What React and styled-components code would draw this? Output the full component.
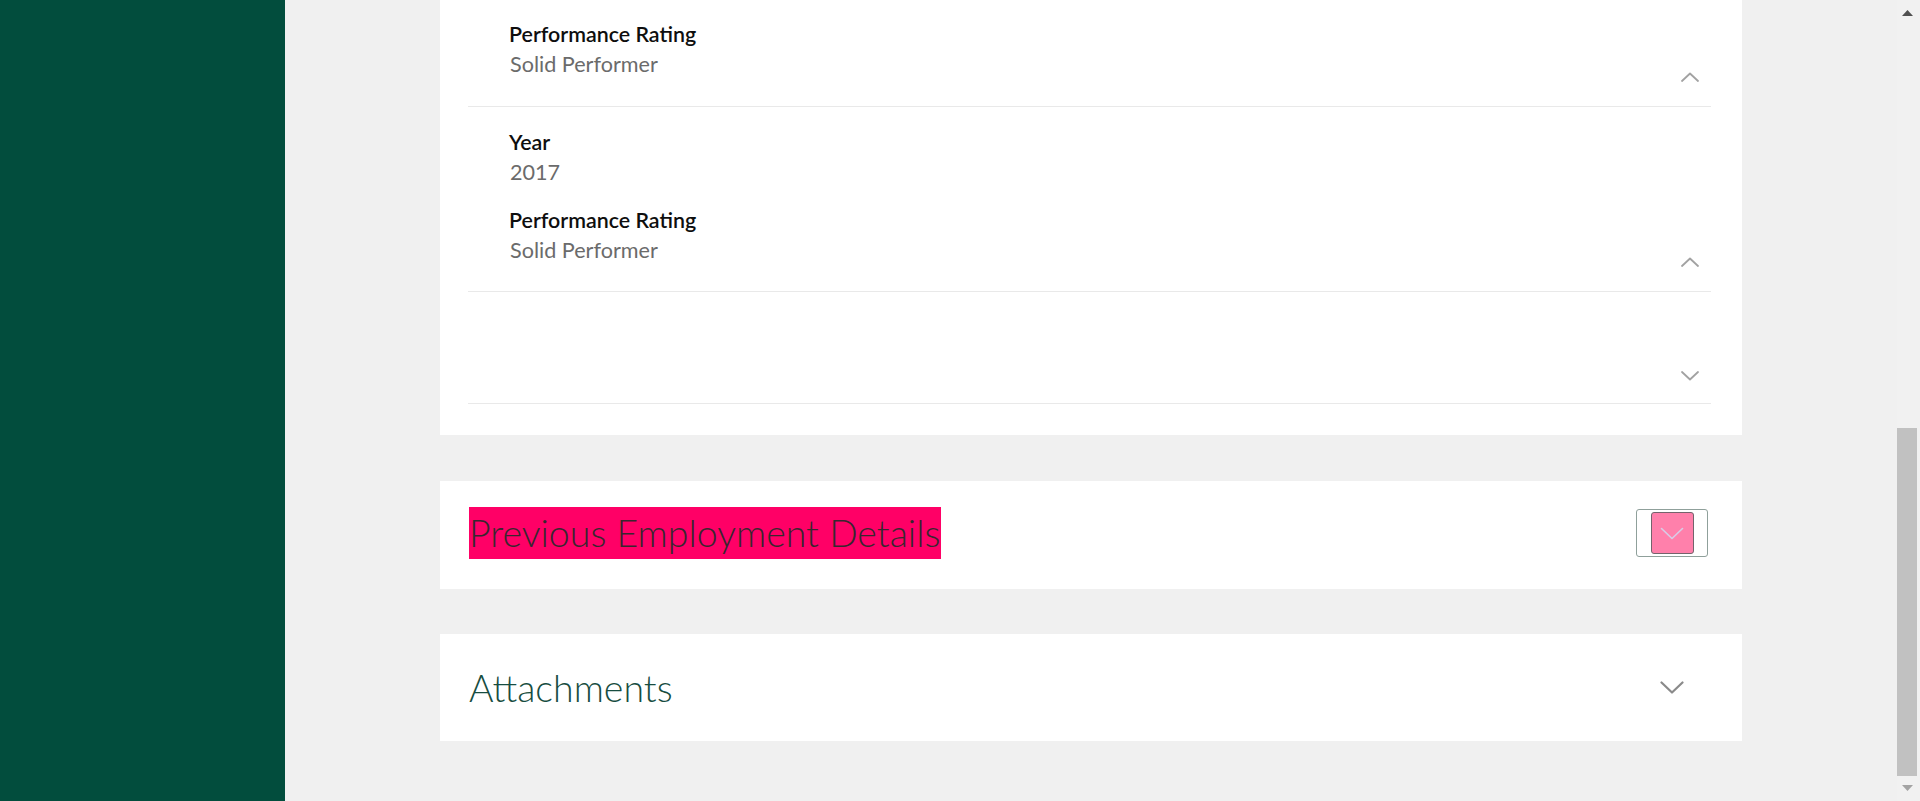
import React from "react";
import styled, { createGlobalStyle } from "styled-components";

const GlobalStyle = createGlobalStyle`
  html, body { margin: 0; padding: 0; }
  body {
    font-family: "Segoe UI", Lato, "Open Sans", sans-serif;
    background: #f0f0f0;
    overflow: hidden;
  }
  * { box-sizing: border-box; }
`;

const Page = styled.div`
  display: flex;
  width: 1920px;
  height: 801px;
  overflow: hidden;
`;

const Sidebar = styled.aside`
  flex: 0 0 285px;
  background: #024d3d;
`;

const Main = styled.main`
  flex: 1;
  display: flex;
  flex-direction: column;
  align-items: center;
  gap: 45px;
  background: #f0f0f0;
  overflow: hidden;
`;

const Card = styled.section`
  width: 1302px;
  flex: 0 0 auto;
  background: #ffffff;
`;

const DetailCard = styled(Card)`
  padding: 0 31px 31px 28px;
  margin-bottom: 1px;
`;

const CardHeader = styled.header`
  display: flex;
  align-items: center;
  justify-content: space-between;
  height: ${(p) => p.$h || 108}px;
  padding: 0 34px ${(p) => p.$pb || 0}px 29px;
`;

const Title = styled.h2`
  margin: 0;
  display: inline-block;
  font-family: Lato, "Open Sans", sans-serif;
  font-weight: 300;
  font-size: 37.5px;
  line-height: 52px;
  padding-right: 1px;
  color: ${(p) => p.$color || "#174d41"};
  background: ${(p) => p.$bg || "transparent"};
`;

const Row = styled.div`
  display: flex;
  justify-content: space-between;
  min-height: ${(p) => p.$minH || 0}px;
  padding-top: ${(p) => (p.$pt != null ? p.$pt : 22)}px;
  border-bottom: 1px solid #e9e9e9;
`;

const Fields = styled.div`
  display: flex;
  flex-direction: column;
  gap: 22px;
  padding: 0 0 ${(p) => (p.$pb != null ? p.$pb : 29)}px 41px;
`;

const Field = styled.div`
  display: flex;
  flex-direction: column;
  gap: 4px;
`;

const Label = styled.div`
  font-family: Lato, "Open Sans", sans-serif;
  font-weight: 600;
  font-size: 21.4px;
  line-height: 26px;
  color: #0e0e0e;
`;

const Value = styled.div`
  font-family: Lato, "Open Sans", sans-serif;
  font-weight: 400;
  font-size: 21.6px;
  line-height: 26px;
  color: #6b6b6b;
  padding-left: 1px;
`;

const RowToggle = styled.div`
  align-self: flex-end;
  display: flex;
  margin: 0 12px ${(p) => p.$mb || 24}px 0;
`;

const ToggleBox = styled.div`
  width: 72px;
  height: 48px;
  display: flex;
  align-items: center;
  justify-content: center;
  border: 1px solid ${(p) => (p.$framed ? "#8fa09b" : "transparent")};
  border-radius: 3px;
  background: #ffffff;
`;

const PinkKey = styled.div`
  width: 43px;
  height: 42px;
  display: flex;
  align-items: center;
  justify-content: center;
  background: #ff80ab;
  border: 1px solid #74636c;
  border-radius: 3px;
`;

const ScrollBar = styled.div`
  flex: 0 0 23px;
  display: flex;
  flex-direction: column;
  background: #f1f1f1;
`;

const ScrollButton = styled.div`
  height: 25px;
  width: 20px;
  display: flex;
  align-items: center;
  justify-content: center;
  padding-top: ${(p) => (p.$up ? "1px" : "0")};
  padding-bottom: ${(p) => (p.$up ? "0" : "1px")};
`;

const Track = styled.div`
  flex: 1;
  display: flex;
  flex-direction: column;
  justify-content: flex-end;
`;

const Thumb = styled.div`
  width: 20px;
  height: 348px;
  background: #c1c1c1;
`;

const SmallChevron = ({ up }) => (
  <svg width="18" height="10" viewBox="0 0 18 10" fill="none">
    <polyline
      points={up ? "1,9 9,1.5 17,9" : "1,1 9,8.5 17,1"}
      stroke="#a2a2a2"
      strokeWidth="1.8"
      strokeLinecap="round"
      strokeLinejoin="round"
    />
  </svg>
);

const BigChevron = ({ color, width = 2 }) => (
  <svg width="24" height="13" viewBox="0 0 24 13" fill="none">
    <polyline
      points="1.5,1.5 12,11.5 22.5,1.5"
      stroke={color}
      strokeWidth={width}
      strokeLinecap="round"
      strokeLinejoin="round"
    />
  </svg>
);

const Triangle = ({ up, color }) => (
  <svg width="11" height="6" viewBox="0 0 11 6">
    <polygon points={up ? "5.5,0 11,6 0,6" : "0,0 11,0 5.5,6"} fill={color} />
  </svg>
);

const rows = [
  {
    id: "r1",
    pt: 21,
    pb: 29,
    fields: [{ label: "Performance Rating", value: "Solid Performer" }],
  },
  {
    id: "r2",
    pt: 22,
    pb: 28,
    fields: [
      { label: "Year", value: "2017" },
      { label: "Performance Rating", value: "Solid Performer" },
    ],
  },
];

export default function App() {
  return (
    <>
      <GlobalStyle />
      <Page>
        <Sidebar />
        <Main>
          <DetailCard>
            {rows.map((r) => (
              <Row key={r.id} $pt={r.pt}>
                <Fields $pb={r.pb}>
                  {r.fields.map((f) => (
                    <Field key={f.label}>
                      <Label>{f.label}</Label>
                      <Value>{f.value}</Value>
                    </Field>
                  ))}
                </Fields>
                <RowToggle>
                  <SmallChevron up />
                </RowToggle>
              </Row>
            ))}
            <Row $minH={112}>
              <Fields />
              <RowToggle $mb={22}>
                <SmallChevron />
              </RowToggle>
            </Row>
          </DetailCard>

          <Card>
            <CardHeader $h={108} $pb={4}>
              <Title $bg="#ff0066" $color="#38272f">
                Previous Employment Details
              </Title>
              <ToggleBox $framed>
                <PinkKey>
                  <BigChevron color="#d8cce6" width={1.6} />
                </PinkKey>
              </ToggleBox>
            </CardHeader>
          </Card>

          <Card>
            <CardHeader $h={107}>
              <Title>Attachments</Title>
              <ToggleBox>
                <BigChevron color="#8a8a8a" width={2.2} />
              </ToggleBox>
            </CardHeader>
          </Card>
        </Main>
        <ScrollBar>
          <ScrollButton $up>
            <Triangle up color="#505050" />
          </ScrollButton>
          <Track>
            <Thumb />
          </Track>
          <ScrollButton>
            <Triangle color="#a3a3a3" />
          </ScrollButton>
        </ScrollBar>
      </Page>
    </>
  );
}
